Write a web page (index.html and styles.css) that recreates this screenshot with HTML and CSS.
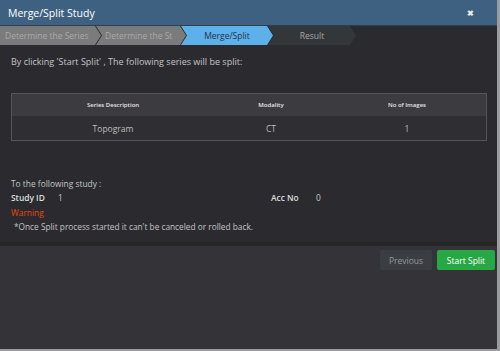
FILE: index.html
```html
<!DOCTYPE html>
<html lang="en">
<head>
    <meta charset="UTF-8">
    <title>Merge/Split Study</title>
    <link rel="stylesheet" href="styles.css">
</head>
<body>
    <div class="modal">
        <!-- Header -->
        <div class="modal-header">
            <span class="modal-title">Merge/Split Study</span>
            <span class="close">&#10006;</span>
        </div>

        <!-- Wizard steps -->
        <div class="steps">
            <div class="step done first">Determine the Series</div>
            <div class="step done second">Determine the St</div>
            <div class="step active">Merge/Split</div>
            <div class="step todo">Result</div>
        </div>

        <div class="modal-body">
            <p class="intro">By clicking 'Start Split' , The following series will be split:</p>

            <table class="series">
                <thead>
                    <tr>
                        <th class="col-desc">Series Description</th>
                        <th class="col-mod">Modality</th>
                        <th>No of Images</th>
                    </tr>
                </thead>
                <tbody>
                    <tr>
                        <td>Topogram</td>
                        <td>CT</td>
                        <td>1</td>
                    </tr>
                </tbody>
            </table>

            <div class="study-info">
                <p class="target">To the following study :</p>
                <div class="study-row">
                    <div class="field"><span class="label">Study ID</span><span>1</span></div>
                    <div class="field acc"><span class="label">Acc No</span><span>0</span></div>
                </div>
                <div class="warning">Warning</div>
                <p class="note">*Once Split process started it can't be canceled or rolled back.</p>
            </div>
        </div>

        <!-- Footer -->
        <div class="modal-footer">
            <button class="btn btn-prev">Previous</button>
            <button class="btn btn-start">Start Split</button>
        </div>
    </div>
</body>
</html>
```

FILE: styles.css
```css
body {
    margin: 0;
    font-family: "Open Sans", Arial, sans-serif;
    background: #9a9ca0;
}

.modal {
    width: 497px;
    height: 349px;
    background: #333338;
    color: #c8c8c8;
    display: flex;
    flex-direction: column;
}

/* Header */
.modal-header {
    height: 25px;
    flex-shrink: 0;
    background: #3e6182;
    display: flex;
    align-items: center;
    justify-content: space-between;
    padding: 0 23px 0 8px;
    border-bottom: 1px solid #2a3f55;
}

.modal-title {
    color: #fff;
    font-size: 10.5px;
}

.close {
    color: #e8e8e8;
    font-size: 8px;
    font-weight: bold;
}

/* Wizard steps */
.steps {
    display: flex;
    height: 19px;
    flex-shrink: 0;
    background: #2b2b2f;
}

.step {
    font-size: 8.5px;
    line-height: 19px;
    text-align: center;
    white-space: nowrap;
    overflow: hidden;
    box-sizing: border-box;
    clip-path: polygon(0 0, calc(100% - 6px) 0, 100% 50%, calc(100% - 6px) 100%, 0 100%, 6px 50%);
    margin-right: -5px;
}

.step.first {
    width: 101px;
    text-align: left;
    padding-left: 5px;
    clip-path: polygon(0 0, calc(100% - 6px) 0, 100% 50%, calc(100% - 6px) 100%, 0 100%);
}

.step.second {
    width: 90px;
    text-align: left;
    padding-left: 9px;
}

.step.done {
    background: #7b7b7b;
    color: #a9a9a9;
}

.step.active {
    background: #5eb0ea;
    color: #233447;
    width: 92px;
}

.step.todo {
    background: #34373a;
    color: #a8a8a8;
    width: 88px;
}

/* Body */
.modal-body {
    height: 197px;
    flex-shrink: 0;
    background: #2b2b2f;
    padding: 0 10px 0 11px;
    border-bottom: 4px solid #262629;
}

.intro {
    margin: 10px 0 0 0;
    font-size: 9px;
    color: #c4c4c4;
}

.series {
    width: 476px;
    margin-top: 25px;
    border-collapse: collapse;
    border: 1px solid #55565a;
}

.series th {
    background: #3b3b40;
    color: #e6e6e6;
    font-size: 6px;
    font-weight: 600;
    height: 22px;
    padding: 0;
}

.series td {
    background: #2f2f33;
    color: #bdbdbd;
    font-size: 8.5px;
    text-align: center;
    height: 24px;
    padding: 0;
}

.col-desc {
    width: 202px;
}

.col-mod {
    width: 114px;
}

.study-info {
    margin-top: 36px;
    font-size: 8.4px;
    line-height: 14.4px;
}

.target {
    margin: 0;
    color: #c4c4c4;
}

.study-row {
    display: flex;
}

.field {
    width: 260px;
    flex-shrink: 0;
}

.field.acc {
    width: auto;
}

.label {
    font-weight: 600;
    color: #dedede;
    display: inline-block;
    width: 47px;
}

.field.acc .label {
    width: 45px;
}

.warning {
    color: #e5470f;
}

.note {
    margin: 0 0 0 3px;
    font-size: 8.3px;
    color: #c4c4c4;
}

/* Footer */
.modal-footer {
    display: flex;
    justify-content: flex-end;
    gap: 5px;
    padding: 4px 2px 0 0;
}

.btn {
    height: 20px;
    border: none;
    border-radius: 2px;
    font-family: "Open Sans", Arial, sans-serif;
    font-size: 8.5px;
    padding: 0;
}

.btn-prev {
    background: #3a3e43;
    color: #989898;
    width: 52px;
}

.btn-start {
    background: #28a845;
    color: #fff;
    width: 58px;
}
```
